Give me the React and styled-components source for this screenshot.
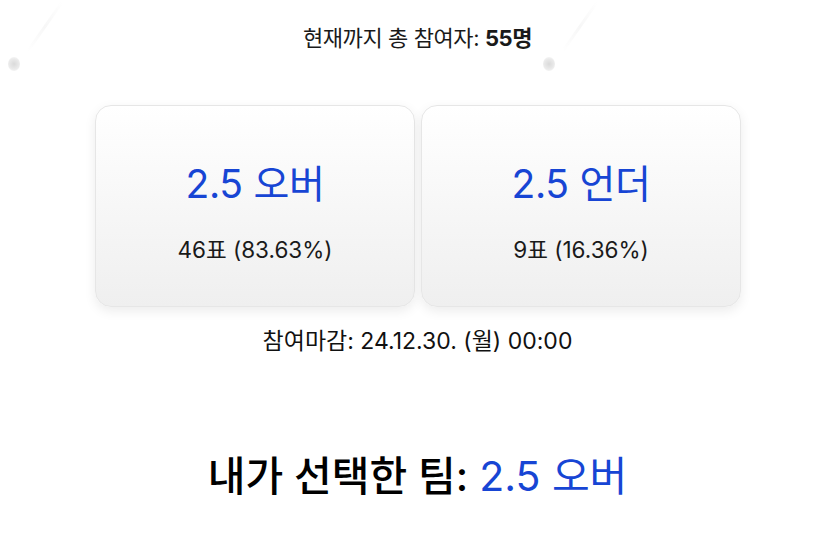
import React from "react";
import styled, { createGlobalStyle } from "styled-components";

const Global = createGlobalStyle`
  html, body { margin: 0; padding: 0; background: #ffffff; }
  body { font-family: "Inter", "Noto Sans CJK KR", sans-serif; color: #111; }
`;

const Page = styled.div`
  position: relative;
  width: 835px;
  height: 534px;
  overflow: hidden;
  display: flex;
  flex-direction: column;
  align-items: center;
  padding-top: 24px;
  box-sizing: border-box;
`;

const Deco = styled.div`
  position: absolute;
  left: ${(p) => p.x}px;
  top: ${(p) => p.y}px;
  width: 12px;
  height: 14px;
  border-radius: 50%;
  background: radial-gradient(circle, #dadada 0%, #eaeaea 55%, rgba(255,255,255,0) 100%);
`;

const Streak = styled.div`
  position: absolute;
  left: ${(p) => p.x}px;
  top: ${(p) => p.y}px;
  width: 60px;
  height: 3px;
  transform: rotate(-55deg);
  background: linear-gradient(90deg, rgba(248,248,248,0), #f7f7f7, rgba(248,248,248,0));
`;

const Total = styled.div`
  font-size: 22px;
  line-height: 28px;
  color: #1a1a1a;
  letter-spacing: -0.4px;
`;

const Strong = styled.b`
  font-weight: 700;
`;

const Cards = styled.div`
  display: flex;
  gap: 6px;
  margin-top: 53px;
  margin-left: 1px;
`;

const Card = styled.div`
  width: 320px;
  height: 202px;
  box-sizing: border-box;
  border: 1px solid #e6e6e6;
  border-radius: 16px;
  background: linear-gradient(180deg, #ffffff 0%, #efefef 100%);
  box-shadow: 0 4px 12px rgba(0, 0, 0, 0.08);
  display: flex;
  flex-direction: column;
  align-items: center;
  padding-top: 55px;
`;

const Team = styled.div`
  font-size: 39px;
  line-height: 46px;
  color: #1745d4;
  letter-spacing: -0.3px;
`;

const Votes = styled.div`
  margin-top: 29px;
  font-size: 22.5px;
  line-height: 28px;
  color: #1a1a1a;
`;

const Deadline = styled.div`
  margin-top: 20px;
  font-size: 23px;
  line-height: 28px;
  color: #111;
`;

const Mine = styled.div`
  margin-top: 96px;
  font-size: 41px;
  line-height: 50px;
  font-weight: 500;
  color: #000;
`;

const Blue = styled.span`
  color: #1745d4;
  font-weight: 400;
`;

const options = [
  { name: "2.5 오버", votes: "46표 (83.63%)" },
  { name: "2.5 언더", votes: "9표 (16.36%)" },
];

export default function App() {
  return (
    <>
      <Global />
      <Page>
        <Streak x={15} y={25} />
        <Deco x={8} y={57} />
        <Streak x={550} y={25} />
        <Deco x={543} y={57} />
        <Total>
          현재까지 총 참여자: <Strong>55명</Strong>
        </Total>
        <Cards>
          {options.map((o) => (
            <Card key={o.name}>
              <Team>{o.name}</Team>
              <Votes>{o.votes}</Votes>
            </Card>
          ))}
        </Cards>
        <Deadline>참여마감: 24.12.30. (월) 00:00</Deadline>
        <Mine>
          내가 선택한 팀: <Blue>2.5 오버</Blue>
        </Mine>
      </Page>
    </>
  );
}
